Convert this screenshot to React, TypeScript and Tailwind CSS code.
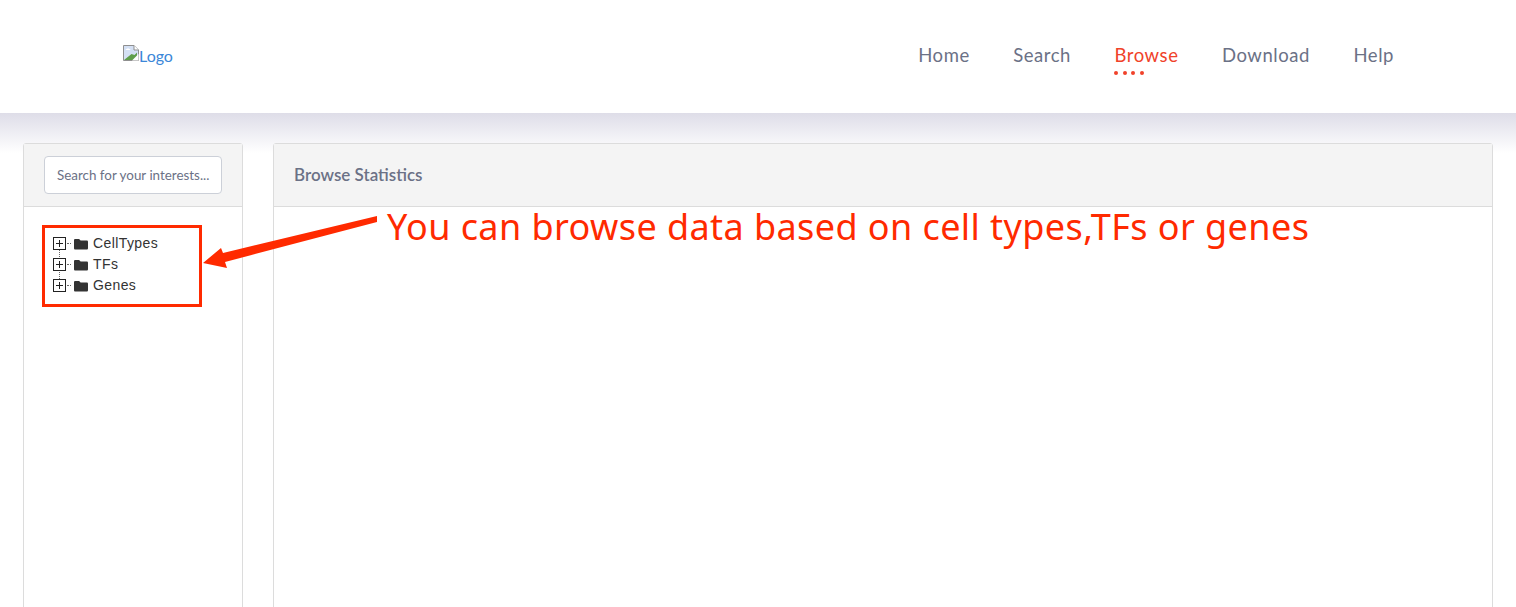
import React from 'react';

const navItems = ['Home', 'Search', 'Browse', 'Download', 'Help'];
const treeItems = ['CellTypes', 'TFs', 'Genes'];

const FolderIcon = () => (
  <svg width="14" height="12" viewBox="0 0 14 12" className="shrink-0">
    <path d="M1.2 1h3.9l1.5 1.6h6.2c.6 0 1.2.5 1.2 1.2v6.4c0 .7-.6 1.3-1.2 1.3H1.2C.6 11.5 0 10.9 0 10.2V2.2C0 1.5.6 1 1.2 1z" fill="#333333" />
  </svg>
);

const PlusBox = () => (
  <svg width="13" height="13" viewBox="0 0 13 13" className="shrink-0">
    <rect x="0.5" y="0.5" width="12" height="12" fill="#ffffff" stroke="#222222" />
    <path d="M3 6.5h7M6.5 3v7" stroke="#222222" />
  </svg>
);

const BrokenImage = () => (
  <svg width="16" height="16" viewBox="0 0 16 16" className="shrink-0">
    <path d="M0.5 0.5h10.5l4.5 4.5v10.5H0.5z" fill="#d4e0f4" stroke="#8f8f8f" />
    <path d="M1 15l7.5-6 3 1L14 7.5V15z" fill="#5f9e4a" />
    <path d="M2.5 5c1-2 4-2 5 0z" fill="#ffffff" />
    <path d="M11 0.5v4.5h4.5" fill="#ffffff" stroke="#8f8f8f" />
    <path d="M9 15.5l6.5-6.5v6.5z" fill="#ffffff" />
  </svg>
);

const App: React.FC = () => {
  return (
    <div className="relative h-[607px] w-[1516px] overflow-hidden bg-white font-['Lato','Open_Sans',sans-serif]">
      {/* Top nav */}
      <header className="flex h-[113px] items-center justify-between bg-white pl-[123px] pr-[122px]">
        <a className="mt-[-5px] flex items-start text-[16px] leading-none text-[#3c87d8]">
          <BrokenImage />
          <span className="mt-[3px]">Logo</span>
        </a>
        <nav className="mt-[-2px] flex gap-[43.5px] text-[18.5px] tracking-[0.55px] text-[#6b7186]">
          {navItems.map((item) => (
            <div key={item} className="relative">
              <span className={item === 'Browse' ? 'text-[#f0422a]' : ''}>{item}</span>
              {item === 'Browse' && (
                <div className="absolute left-0 top-[29px] flex gap-[4.5px]">
                  <i className="h-[4px] w-[4px] rounded-full bg-[#f0422a]" />
                  <i className="h-[4px] w-[4px] rounded-full bg-[#f0422a]" />
                  <i className="h-[4px] w-[4px] rounded-full bg-[#f0422a]" />
                  <i className="h-[4px] w-[4px] rounded-full bg-[#f0422a]" />
                </div>
              )}
            </div>
          ))}
        </nav>
      </header>

      {/* Content */}
      <main className="flex h-[494px] gap-[30px] bg-[linear-gradient(to_bottom,#dedde8_0px,#ffffff_40px)] pl-[23px] pr-[23px] pt-[30px]">
        <section className="flex h-[500px] w-[220px] shrink-0 flex-col rounded-t-[3px] border border-[#dcdcdc] bg-white">
          <div className="flex h-[63px] items-center justify-center border-b border-[#dcdcdc] bg-[#f4f4f4]">
            <div className="flex h-[38px] w-[178px] items-center rounded-[4px] border border-[#ccd0d8] bg-white pl-3 text-[13.4px] text-[#6b7186]">
              Search for your interests...
            </div>
          </div>
          <div className="relative flex flex-col gap-[4px] pl-[29px] pt-[28px]">
            <div className="absolute left-[35px] top-[42px] h-[30px] border-l border-dotted border-[#666666]" />
            {treeItems.map((item) => (
              <div key={item} className="relative flex h-[17px] items-center text-[14px] text-[#333333]">
                <PlusBox />
                <span className="ml-[1px] mr-[3px] w-[4px] border-t border-dotted border-[#666666]" />
                <FolderIcon />
                <span className="ml-[5px] font-['Liberation_Sans','Open_Sans',sans-serif] tracking-[0.4px]">{item}</span>
              </div>
            ))}
          </div>
        </section>

        <section className="flex h-[500px] flex-1 flex-col rounded-t-[3px] border border-[#dcdcdc] bg-white">
          <div className="flex h-[63px] items-center border-b border-[#dcdcdc] bg-[#f4f4f4] pl-5 text-[17px] font-semibold text-[#6b7186]">
            Browse Statistics
          </div>
          <div className="flex-1" />
        </section>
      </main>

      {/* Annotation overlay */}
      <div className="absolute left-[42px] top-[225px] h-[82px] w-[160px] border-[3px] border-[#ff2a00]" />
      <svg className="absolute left-[200px] top-[210px]" width="180" height="62" viewBox="0 0 180 62">
        <path d="M177 6L177 12L25 52L27 58L3 53L21 38L23 43z" fill="#ff2a00" />
      </svg>
      <div className="absolute left-[387px] top-[202px] whitespace-nowrap font-['Noto_Sans',sans-serif] text-[36px] leading-[50px] tracking-[0.42px] text-[#ff2a00]">
        You can browse data based on cell types,TFs or genes
      </div>
    </div>
  );
};

export default App;
